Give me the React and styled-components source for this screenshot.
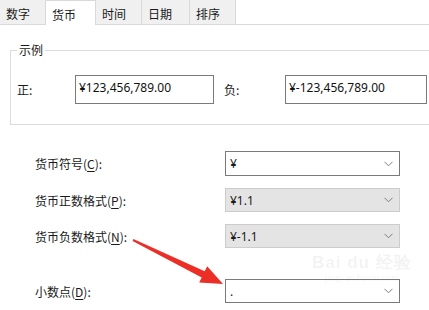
import React from "react"
import styled, { createGlobalStyle } from "styled-components"

const GlobalStyle = createGlobalStyle`
  body {
    margin: 0;
    background: #ffffff;
    font-family: "Noto Sans CJK SC", "Noto Sans", sans-serif;
    color: #1a1a1a;
  }
`

const Page = styled.div`
  position: relative;
  width: 429px;
  height: 310px;
  overflow: hidden;
  background: #ffffff;
`

const TabBar = styled.div`
  display: flex;
  height: 25px;
`

const Tab = styled.div`
  box-sizing: border-box;
  width: ${props => props.$width}px;
  padding: 2px 0 0 6px;
  display: flex;
  align-items: center;
  font-size: 12px;
  background: ${props => (props.$active ? "#ffffff" : "#f0f0f0")};
  border-right: 1px solid #d9d9d9;
  border-bottom: ${props => (props.$active ? "none" : "1px solid #d9d9d9")};
  border-top: ${props => (props.$active ? "1px solid #d9d9d9" : "none")};
  color: #1a1a1a;
`

const TabFiller = styled.div`
  flex: 1;
  border-bottom: 1px solid #d9d9d9;
`

const GroupBox = styled.fieldset`
  margin: 17px -20px 0 10px;
  padding: 0 0 20px 6px;
  border: 1px solid #dcdcdc;
  min-width: 0;
`

const Legend = styled.legend`
  padding: 0 2px;
  font-size: 12px;
  line-height: 16px;
  color: #1a1a1a;
`

const SampleRow = styled.div`
  display: flex;
  align-items: center;
  margin-top: 17px;
`

const SampleLabel = styled.div`
  width: ${props => props.$width}px;
  margin-left: ${props => props.$offset || 0}px;
  font-size: 12px;
`

const SampleBox = styled.div`
  box-sizing: border-box;
  width: ${props => props.$width}px;
  height: 29px;
  border: 1px solid #7a7a7a;
  padding: 4px 0 0 3px;
  font-family: "Noto Sans", sans-serif;
  font-size: 12px;
  line-height: 16px;
  color: #111;
`

const Form = styled.div`
  display: flex;
  flex-direction: column;
  padding: 26px 0 0 35px;
`

const FormRow = styled.div`
  display: flex;
  align-items: center;
  margin-top: ${props => props.$gap}px;
`

const FormLabel = styled.div`
  width: 190px;
  font-size: 12px;
  color: #1a1a1a;

  u {
    text-underline-offset: 2px;
  }
`

const Combo = styled.div`
  box-sizing: border-box;
  width: 175px;
  height: ${props => props.$height || 24}px;
  display: flex;
  align-items: center;
  justify-content: space-between;
  padding: 0 6px 0 4px;
  border: 1px solid ${props => (props.$disabled ? "#cccccc" : "#7a7a7a")};
  background: ${props => (props.$disabled ? "#e4e4e4" : "#ffffff")};
  font-family: "Noto Sans", sans-serif;
  font-size: 12px;
  color: #1a1a1a;
`

const Overlay = styled.svg`
  position: absolute;
  left: 0;
  top: 0;
  pointer-events: none;
`

const Watermark = styled.div`
  position: absolute;
  left: 312px;
  top: 254px;
  display: flex;
  flex-direction: column;
  align-items: center;
  color: rgba(120, 120, 120, 0.09);
  pointer-events: none;
`

const WatermarkBig = styled.div`
  font-family: "Liberation Sans", sans-serif;
  font-size: 17px;
  font-weight: bold;
  letter-spacing: 1px;
  line-height: 18px;
`

const WatermarkSmall = styled.div`
  font-family: "Liberation Serif", serif;
  font-size: 10px;
  line-height: 12px;
`

const Chevron = () => (
  <svg width="9" height="6" viewBox="0 0 9 6">
    <path d="M0.5 0.8 L4.5 4.8 L8.5 0.8" fill="none" stroke="#7d7d7d" strokeWidth="1" />
  </svg>
)

const tabs = [
  { label: "数字", width: 46 },
  { label: "货币", width: 50, active: true },
  { label: "时间", width: 46 },
  { label: "日期", width: 48 },
  { label: "排序", width: 46 },
]

const rows = [
  { label: "货币符号", key: "C", value: "¥", gap: 0, height: 25 },
  { label: "货币正数格式", key: "P", value: "¥1.1", gap: 12, disabled: true },
  { label: "货币负数格式", key: "N", value: "¥-1.1", gap: 12, disabled: true },
  { label: "小数点", key: "D", value: ".", gap: 31 },
]

const App = () => {
  return (
    <Page>
      <GlobalStyle />
      <TabBar>
        {tabs.map(t => (
          <Tab key={t.label} $width={t.width} $active={t.active}>
            {t.label}
          </Tab>
        ))}
        <TabFiller />
      </TabBar>

      <GroupBox>
        <Legend>示例</Legend>
        <SampleRow>
          <SampleLabel $width={58}>正:</SampleLabel>
          <SampleBox $width={139}>¥123,456,789.00</SampleBox>
          <SampleLabel $width={61} $offset={10}>负:</SampleLabel>
          <SampleBox $width={142}>¥-123,456,789.00</SampleBox>
        </SampleRow>
      </GroupBox>

      <Form>
        {rows.map(r => (
          <FormRow key={r.key} $gap={r.gap}>
            <FormLabel>
              {r.label}(<u>{r.key}</u>):
            </FormLabel>
            <Combo $disabled={r.disabled} $height={r.height}>
              <span>{r.value}</span>
              <Chevron />
            </Combo>
          </FormRow>
        ))}
      </Form>

      <Watermark>
        <WatermarkBig>Bai du 经验</WatermarkBig>
        <WatermarkSmall>jingyan.baidu.com</WatermarkSmall>
      </Watermark>

      <Overlay width="429" height="310" viewBox="0 0 429 310">
        <polygon
          points="133.4,239.1 204.7,271.2 207.2,266.2 223,284 199.2,282.4 201.7,277.4 132.6,240.9"
          fill="#ec2f26"
        />
      </Overlay>
    </Page>
  )
}

export default App
